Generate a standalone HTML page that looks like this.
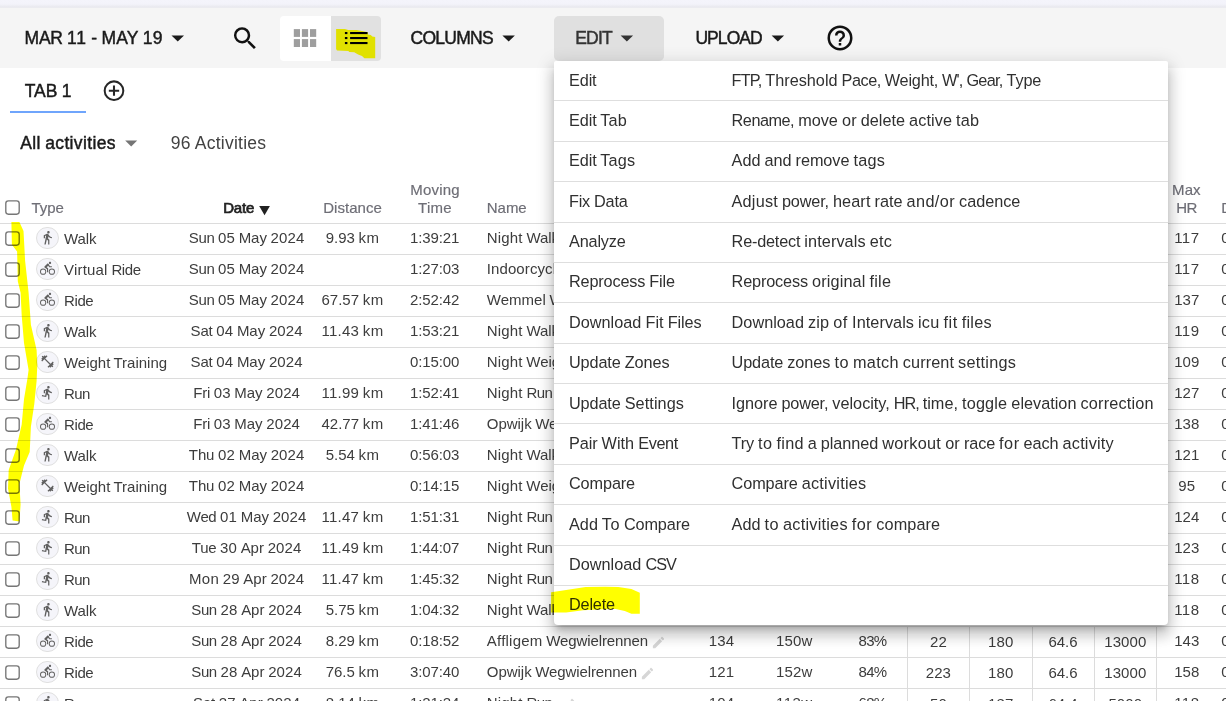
<!DOCTYPE html>
<html lang="en"><head><meta charset="utf-8"><title>Activities</title>
<style>
html,body{margin:0;padding:0}
body{width:1226px;height:701px;overflow:hidden;position:relative;background:#fff;font-family:"Liberation Sans",sans-serif;}
.t{position:absolute;white-space:pre;line-height:20px;}
.a{position:absolute}
.rl{position:absolute;left:0;width:1226px;height:1px;background:#dcdcdc}
.cb{position:absolute;left:5px;width:15px;height:15px}
.ci{position:absolute;left:36.3px;width:20.5px;height:20.5px;border:1px solid #e0e0e0;border-radius:50%;background:#f5f5fa}
.ci svg{position:absolute;left:2.7px;top:2.35px;width:15px;height:15px;fill:#616161}
.vl{position:absolute;width:1px;background:#dcdcdc}
.md{position:absolute;left:0;width:614px;height:1px;background:#dedede}
svg{display:block}
</style></head><body>

<header>
<div class="a" style="left:0;top:0;width:1226px;height:8px;background:linear-gradient(#f4f4fb 0%,#f3f3fa 50%,#eeeef4 70%,#e8e8ee 88%,#eeeef1 100%)"></div>
<div class="a" style="left:0;top:8px;width:1226px;height:60px;background:#f5f5f5"></div>
<div class="a" style="left:280px;top:16px;width:51px;height:45px;background:#fff;border-radius:4px 0 0 4px"></div>
<div class="a" style="left:331px;top:16px;width:50px;height:45px;background:#e1e1e1;border-radius:0 4px 4px 0"></div>
<svg class="a" style="left:0;top:0" width="400" height="70" viewBox="0 0 400 70"><g fill="#9e9e9e"><rect x="293.8" y="29.1" width="6.2" height="7.8"/><rect x="293.8" y="39.1" width="6.2" height="7.9"/><rect x="301.9" y="29.1" width="6.2" height="7.8"/><rect x="301.9" y="39.1" width="6.2" height="7.9"/><rect x="310.0" y="29.1" width="6.2" height="7.8"/><rect x="310.0" y="39.1" width="6.2" height="7.9"/></g>
<g fill="#000"><rect x="344.9" y="32.0" width="2.5" height="2.1"/><rect x="350.1" y="32.0" width="17.4" height="2.1"/><rect x="344.9" y="37.0" width="2.5" height="2.1"/><rect x="350.1" y="37.0" width="17.4" height="2.1"/><rect x="344.9" y="42.0" width="2.5" height="2.1"/><rect x="350.1" y="42.0" width="17.4" height="2.1"/></g></svg>
<div class="a" style="left:554px;top:16px;width:110px;height:45px;background:#e0e0e0;border-radius:5px"></div>
<svg class="a" style="left:0;top:0" width="1226" height="230" viewBox="0 0 1226 230">
<polygon points="171.5,35.4 184.0,35.4 177.75,41.6" fill="#1a1a1a"/>
<polygon points="502.4,35.4 514.9,35.4 508.65,41.6" fill="#1a1a1a"/>
<polygon points="620.6,35.4 633.1,35.4 626.85,41.6" fill="#333"/>
<polygon points="771.6,35.4 784.1,35.4 777.85,41.6" fill="#1a1a1a"/>
<polygon points="125.2,140.4 137.2,140.4 131.2,146.4" fill="#757575"/>
<g transform="translate(230.2,23.4) scale(1.25)" fill="#111"><path d="M9.5,3A6.5,6.5 0 0,1 16,9.5C16,11.11 15.41,12.59 14.44,13.73L14.71,14H15.5L20.5,19L19,20.5L14,15.500V14.71L13.73,14.44C12.59,15.41 11.11,16 9.5,16A6.5,6.5 0 0,1 3,9.5A6.5,6.5 0 0,1 9.500,3M9.5,5C7,5 5,7 5,9.5C5,12 7,14 9.5,14C12,14 14,12 14,9.5C14,7 12,5 9.500,5Z"/></g>
<g transform="translate(825,22.9) scale(1.25)" fill="#111"><path d="M11,18H13V16H11V18M12,2A10,10 0 0,0 2,12A10,10 0 0,0 12,22A10,10 0 0,0 22,12A10,10 0 0,0 12,2M12,20C7.59,20 4,16.41 4,12C4,7.59 7.59,4 12,4C16.41,4 20,7.59 20,12C20,16.41 16.41,20 12,20M12,6A4,4 0 0,0 8,10H10A2,2 0 0,1 12,8A2,2 0 0,1 14,10C14,12 11,11.75 11,15H13C13,12.75 16,12.5 16,10A4,4 0 0,0 12,6Z"/></g>
<g transform="translate(101.6,78.3) scale(1.033)" fill="#262626"><path d="M12,20C7.59,20 4,16.41 4,12C4,7.59 7.59,4 12,4C16.41,4 20,7.59 20,12C20,16.41 16.41,20 12,20M12,2A10,10 0 0,0 2,12A10,10 0 0,0 12,22A10,10 0 0,0 22,12A10,10 0 0,0 12,2M13,7H11V11H7V13H11V17H13V13H17V11H13V7Z"/></g>
</svg>
<div class="a" style="left:10px;top:111px;width:76px;height:2px;background:#6fa5fc"></div>
<span class="t" style="left:24.60px;top:28px;font-size:17.5px;color:#1a1a1a;-webkit-text-stroke:0.45px #1a1a1a;word-spacing:-0.522px"><span style="letter-spacing:-0.27px">MAR</span> <span style="letter-spacing:0.87px">11</span> <span style="letter-spacing:0.12px">-</span> <span style="letter-spacing:0.05px">MAY</span> <span style="letter-spacing:0.22px">19</span></span>
<span class="t" style="left:410.60px;top:28px;font-size:17.5px;color:#1a1a1a;-webkit-text-stroke:0.45px #1a1a1a;letter-spacing:-0.739px">COLUMNS</span>
<span class="t" style="left:575.20px;top:28px;font-size:17.5px;color:#333;-webkit-text-stroke:0.45px #333;letter-spacing:-0.797px">EDIT</span>
<span class="t" style="left:695.40px;top:28px;font-size:17.5px;color:#1a1a1a;-webkit-text-stroke:0.45px #1a1a1a;letter-spacing:-0.922px">UPLOAD</span>
<span class="t" style="left:24.80px;top:81px;font-size:17.5px;color:#1a1a1a;-webkit-text-stroke:0.45px #1a1a1a;word-spacing:-0.518px"><span style="letter-spacing:-0.08px">TAB</span> <span style="letter-spacing:0.22px">1</span></span>
<span class="t" style="left:20.30px;top:133px;font-size:17.5px;color:#1a1a1a;-webkit-text-stroke:0.45px #1a1a1a;word-spacing:-0.518px"><span style="letter-spacing:0.36px">All</span> <span style="letter-spacing:0.36px">activities</span></span>
<span class="t" style="left:170.80px;top:133px;font-size:17.5px;color:#424242;word-spacing:-0.534px"><span style="letter-spacing:0.10px">96</span> <span style="letter-spacing:0.25px">Activities</span></span>
</header>
<main>
<div class="rl" style="top:223.0px"></div>
<div class="rl" style="top:254.0px"></div>
<div class="rl" style="top:285.0px"></div>
<div class="rl" style="top:316.0px"></div>
<div class="rl" style="top:347.0px"></div>
<div class="rl" style="top:378.0px"></div>
<div class="rl" style="top:409.0px"></div>
<div class="rl" style="top:440.0px"></div>
<div class="rl" style="top:471.0px"></div>
<div class="rl" style="top:502.0px"></div>
<div class="rl" style="top:533.0px"></div>
<div class="rl" style="top:564.0px"></div>
<div class="rl" style="top:595.0px"></div>
<div class="rl" style="top:626.0px"></div>
<div class="rl" style="top:657.0px"></div>
<div class="rl" style="top:688.0px"></div>
<div class="vl" style="left:907px;top:626px;height:75px"></div>
<div class="vl" style="left:969px;top:626px;height:75px"></div>
<div class="vl" style="left:1032px;top:626px;height:75px"></div>
<div class="vl" style="left:1094px;top:626px;height:75px"></div>
<div class="vl" style="left:1156px;top:626px;height:75px"></div>
<div class="cb" style="top:199.8px"><svg viewBox="0 0 15 15" width="15" height="15"><rect x="0.8" y="0.8" width="13.4" height="13.4" rx="2.6" fill="#fff" stroke="#767676" stroke-width="1.35"/></svg></div>
<div class="cb" style="top:230.5px"><svg viewBox="0 0 15 15" width="15" height="15"><rect x="0.8" y="0.8" width="13.4" height="13.4" rx="2.6" fill="#fff" stroke="#767676" stroke-width="1.35"/></svg></div>
<div class="ci" style="top:226.7px"><svg viewBox="0 0 24 24"><path d="M13.5,5.5C14.6,5.5 15.5,4.6 15.5,3.5C15.5,2.4 14.6,1.5 13.5,1.5C12.4,1.5 11.5,2.4 11.5,3.5C11.5,4.6 12.4,5.5 13.5,5.5M9.8,8.9L7,23H9.1L10.9,15L13,17V23H15V15.5L12.9,13.5L13.5,10.5C14.8,12 16.8,13 19,13V11C17.1,11 15.5,10 14.7,8.6L13.7,7C13.3,6.4 12.7,6 12,6C11.7,6 11.5,6.1 11.2,6.1L6,8.3V13H8V9.6L9.8,8.9Z"/></svg></div>
<div class="cb" style="top:261.5px"><svg viewBox="0 0 15 15" width="15" height="15"><rect x="0.8" y="0.8" width="13.4" height="13.4" rx="2.6" fill="#fff" stroke="#767676" stroke-width="1.35"/></svg></div>
<div class="ci" style="top:257.7px"><svg viewBox="0 0 24 24"><path d="M5,20.5A3.5,3.5 0 0,1 1.5,17A3.5,3.5 0 0,1 5,13.5A3.5,3.5 0 0,1 8.5,17A3.5,3.5 0 0,1 5,20.5M5,12A5,5 0 0,0 0,17A5,5 0 0,0 5,22A5,5 0 0,0 10,17A5,5 0 0,0 5,12M14.8,10H19V8.2H15.8L13.86,4.93C13.57,4.43 13,4.1 12.4,4.1C11.93,4.1 11.5,4.29 11.2,4.6L7.5,8.29C7.19,8.6 7,9 7,9.5C7,10.13 7.33,10.66 7.85,10.97L11.2,13V18H13V11.5L10.75,9.85L13.07,7.5M19,20.5A3.5,3.5 0 0,1 15.5,17A3.5,3.5 0 0,1 19,13.5A3.5,3.5 0 0,1 22.5,17A3.5,3.5 0 0,1 19,20.5M19,12A5,5 0 0,0 14,17A5,5 0 0,0 19,22A5,5 0 0,0 24,17A5,5 0 0,0 19,12M16,4.8C17,4.8 17.8,4 17.8,3C17.8,2 17,1.2 16,1.2C15,1.2 14.2,2 14.2,3C14.2,4 15,4.8 16,4.8Z"/></svg></div>
<div class="cb" style="top:292.5px"><svg viewBox="0 0 15 15" width="15" height="15"><rect x="0.8" y="0.8" width="13.4" height="13.4" rx="2.6" fill="#fff" stroke="#767676" stroke-width="1.35"/></svg></div>
<div class="ci" style="top:288.7px"><svg viewBox="0 0 24 24"><path d="M5,20.5A3.5,3.5 0 0,1 1.5,17A3.5,3.5 0 0,1 5,13.5A3.5,3.5 0 0,1 8.5,17A3.5,3.5 0 0,1 5,20.5M5,12A5,5 0 0,0 0,17A5,5 0 0,0 5,22A5,5 0 0,0 10,17A5,5 0 0,0 5,12M14.8,10H19V8.2H15.8L13.86,4.93C13.57,4.43 13,4.1 12.4,4.1C11.93,4.1 11.5,4.29 11.2,4.6L7.5,8.29C7.19,8.6 7,9 7,9.5C7,10.13 7.33,10.66 7.85,10.97L11.2,13V18H13V11.5L10.75,9.85L13.07,7.5M19,20.5A3.5,3.5 0 0,1 15.5,17A3.5,3.5 0 0,1 19,13.5A3.5,3.5 0 0,1 22.5,17A3.5,3.5 0 0,1 19,20.5M19,12A5,5 0 0,0 14,17A5,5 0 0,0 19,22A5,5 0 0,0 24,17A5,5 0 0,0 19,12M16,4.8C17,4.8 17.8,4 17.8,3C17.8,2 17,1.2 16,1.2C15,1.2 14.2,2 14.2,3C14.2,4 15,4.8 16,4.8Z"/></svg></div>
<div class="cb" style="top:323.5px"><svg viewBox="0 0 15 15" width="15" height="15"><rect x="0.8" y="0.8" width="13.4" height="13.4" rx="2.6" fill="#fff" stroke="#767676" stroke-width="1.35"/></svg></div>
<div class="ci" style="top:319.7px"><svg viewBox="0 0 24 24"><path d="M13.5,5.5C14.6,5.5 15.5,4.6 15.5,3.5C15.5,2.4 14.6,1.5 13.5,1.5C12.4,1.5 11.5,2.4 11.5,3.5C11.5,4.6 12.4,5.5 13.5,5.5M9.8,8.9L7,23H9.1L10.9,15L13,17V23H15V15.5L12.9,13.5L13.5,10.5C14.8,12 16.8,13 19,13V11C17.1,11 15.5,10 14.7,8.6L13.7,7C13.3,6.4 12.7,6 12,6C11.7,6 11.5,6.1 11.2,6.1L6,8.3V13H8V9.6L9.8,8.9Z"/></svg></div>
<div class="cb" style="top:354.5px"><svg viewBox="0 0 15 15" width="15" height="15"><rect x="0.8" y="0.8" width="13.4" height="13.4" rx="2.6" fill="#fff" stroke="#767676" stroke-width="1.35"/></svg></div>
<div class="ci" style="top:350.7px"><svg viewBox="0 0 24 24"><path d="M20.57,14.86L22,13.43L20.57,12L17,15.57L8.43,7L12,3.43L10.57,2L9.14,3.43L7.71,2L5.57,4.14L4.14,2.71L2.71,4.14L4.14,5.57L2,7.71L3.43,9.14L2,10.57L3.43,12L7,8.43L15.57,17L12,20.57L13.43,22L14.86,20.57L16.29,22L18.43,19.86L19.86,21.29L21.29,19.86L19.86,18.43L22,16.29L20.57,14.86Z"/></svg></div>
<div class="cb" style="top:385.5px"><svg viewBox="0 0 15 15" width="15" height="15"><rect x="0.8" y="0.8" width="13.4" height="13.4" rx="2.6" fill="#fff" stroke="#767676" stroke-width="1.35"/></svg></div>
<div class="ci" style="top:381.7px"><svg viewBox="0 0 24 24"><path d="M13.5,5.5C14.59,5.5 15.5,4.58 15.5,3.5C15.5,2.38 14.59,1.5 13.5,1.5C12.39,1.5 11.5,2.38 11.5,3.5C11.5,4.58 12.39,5.5 13.5,5.5M9.89,19.38L10.89,15L13,17V23H15V15.5L12.89,13.5L13.5,10.5C14.79,12 16.79,13 19,13V11C17.09,11 15.5,10 14.69,8.58L13.69,7C13.29,6.38 12.69,6 12,6C11.69,6 11.5,6.08 11.19,6.08L6,8.28V13H8V9.58L9.79,8.88L8.19,17L3.29,16L2.89,18L9.89,19.38Z"/></svg></div>
<div class="cb" style="top:416.5px"><svg viewBox="0 0 15 15" width="15" height="15"><rect x="0.8" y="0.8" width="13.4" height="13.4" rx="2.6" fill="#fff" stroke="#767676" stroke-width="1.35"/></svg></div>
<div class="ci" style="top:412.7px"><svg viewBox="0 0 24 24"><path d="M5,20.5A3.5,3.5 0 0,1 1.5,17A3.5,3.5 0 0,1 5,13.5A3.5,3.5 0 0,1 8.5,17A3.5,3.5 0 0,1 5,20.5M5,12A5,5 0 0,0 0,17A5,5 0 0,0 5,22A5,5 0 0,0 10,17A5,5 0 0,0 5,12M14.8,10H19V8.2H15.8L13.86,4.93C13.57,4.43 13,4.1 12.4,4.1C11.93,4.1 11.5,4.29 11.2,4.6L7.5,8.29C7.19,8.6 7,9 7,9.5C7,10.13 7.33,10.66 7.85,10.97L11.2,13V18H13V11.5L10.75,9.85L13.07,7.5M19,20.5A3.5,3.5 0 0,1 15.5,17A3.5,3.5 0 0,1 19,13.5A3.5,3.5 0 0,1 22.5,17A3.5,3.5 0 0,1 19,20.5M19,12A5,5 0 0,0 14,17A5,5 0 0,0 19,22A5,5 0 0,0 24,17A5,5 0 0,0 19,12M16,4.8C17,4.8 17.8,4 17.8,3C17.8,2 17,1.2 16,1.2C15,1.2 14.2,2 14.2,3C14.2,4 15,4.8 16,4.8Z"/></svg></div>
<div class="cb" style="top:447.5px"><svg viewBox="0 0 15 15" width="15" height="15"><rect x="0.8" y="0.8" width="13.4" height="13.4" rx="2.6" fill="#fff" stroke="#767676" stroke-width="1.35"/></svg></div>
<div class="ci" style="top:443.7px"><svg viewBox="0 0 24 24"><path d="M13.5,5.5C14.6,5.5 15.5,4.6 15.5,3.5C15.5,2.4 14.6,1.5 13.5,1.5C12.4,1.5 11.5,2.4 11.5,3.5C11.5,4.6 12.4,5.5 13.5,5.5M9.8,8.9L7,23H9.1L10.9,15L13,17V23H15V15.5L12.9,13.5L13.5,10.5C14.8,12 16.8,13 19,13V11C17.1,11 15.5,10 14.7,8.6L13.7,7C13.3,6.4 12.7,6 12,6C11.7,6 11.5,6.1 11.2,6.1L6,8.3V13H8V9.6L9.8,8.9Z"/></svg></div>
<div class="cb" style="top:478.5px"><svg viewBox="0 0 15 15" width="15" height="15"><rect x="0.8" y="0.8" width="13.4" height="13.4" rx="2.6" fill="#fff" stroke="#767676" stroke-width="1.35"/></svg></div>
<div class="ci" style="top:474.7px"><svg viewBox="0 0 24 24"><path d="M20.57,14.86L22,13.43L20.57,12L17,15.57L8.43,7L12,3.43L10.57,2L9.14,3.43L7.71,2L5.57,4.14L4.14,2.71L2.71,4.14L4.14,5.57L2,7.71L3.43,9.14L2,10.57L3.43,12L7,8.43L15.57,17L12,20.57L13.43,22L14.86,20.57L16.29,22L18.43,19.86L19.86,21.29L21.29,19.86L19.86,18.43L22,16.29L20.57,14.86Z"/></svg></div>
<div class="cb" style="top:509.5px"><svg viewBox="0 0 15 15" width="15" height="15"><rect x="0.8" y="0.8" width="13.4" height="13.4" rx="2.6" fill="#fff" stroke="#767676" stroke-width="1.35"/></svg></div>
<div class="ci" style="top:505.7px"><svg viewBox="0 0 24 24"><path d="M13.5,5.5C14.59,5.5 15.5,4.58 15.5,3.5C15.5,2.38 14.59,1.5 13.5,1.5C12.39,1.5 11.5,2.38 11.5,3.5C11.5,4.58 12.39,5.5 13.5,5.5M9.89,19.38L10.89,15L13,17V23H15V15.5L12.89,13.5L13.5,10.5C14.79,12 16.79,13 19,13V11C17.09,11 15.5,10 14.69,8.58L13.69,7C13.29,6.38 12.69,6 12,6C11.69,6 11.5,6.08 11.19,6.08L6,8.28V13H8V9.58L9.79,8.88L8.19,17L3.29,16L2.89,18L9.89,19.38Z"/></svg></div>
<div class="cb" style="top:540.5px"><svg viewBox="0 0 15 15" width="15" height="15"><rect x="0.8" y="0.8" width="13.4" height="13.4" rx="2.6" fill="#fff" stroke="#767676" stroke-width="1.35"/></svg></div>
<div class="ci" style="top:536.7px"><svg viewBox="0 0 24 24"><path d="M13.5,5.5C14.59,5.5 15.5,4.58 15.5,3.5C15.5,2.38 14.59,1.5 13.5,1.5C12.39,1.5 11.5,2.38 11.5,3.5C11.5,4.58 12.39,5.5 13.5,5.5M9.89,19.38L10.89,15L13,17V23H15V15.5L12.89,13.5L13.5,10.5C14.79,12 16.79,13 19,13V11C17.09,11 15.5,10 14.69,8.58L13.69,7C13.29,6.38 12.69,6 12,6C11.69,6 11.5,6.08 11.19,6.08L6,8.28V13H8V9.58L9.79,8.88L8.19,17L3.29,16L2.89,18L9.89,19.38Z"/></svg></div>
<div class="cb" style="top:571.5px"><svg viewBox="0 0 15 15" width="15" height="15"><rect x="0.8" y="0.8" width="13.4" height="13.4" rx="2.6" fill="#fff" stroke="#767676" stroke-width="1.35"/></svg></div>
<div class="ci" style="top:567.7px"><svg viewBox="0 0 24 24"><path d="M13.5,5.5C14.59,5.5 15.5,4.58 15.5,3.5C15.5,2.38 14.59,1.5 13.5,1.5C12.39,1.5 11.5,2.38 11.5,3.5C11.5,4.58 12.39,5.5 13.5,5.5M9.89,19.38L10.89,15L13,17V23H15V15.5L12.89,13.5L13.5,10.5C14.79,12 16.79,13 19,13V11C17.09,11 15.5,10 14.69,8.58L13.69,7C13.29,6.38 12.69,6 12,6C11.69,6 11.5,6.08 11.19,6.08L6,8.28V13H8V9.58L9.79,8.88L8.19,17L3.29,16L2.89,18L9.89,19.38Z"/></svg></div>
<div class="cb" style="top:602.5px"><svg viewBox="0 0 15 15" width="15" height="15"><rect x="0.8" y="0.8" width="13.4" height="13.4" rx="2.6" fill="#fff" stroke="#767676" stroke-width="1.35"/></svg></div>
<div class="ci" style="top:598.7px"><svg viewBox="0 0 24 24"><path d="M13.5,5.5C14.6,5.5 15.5,4.6 15.5,3.5C15.5,2.4 14.6,1.5 13.5,1.5C12.4,1.5 11.5,2.4 11.5,3.5C11.5,4.6 12.4,5.5 13.5,5.5M9.8,8.9L7,23H9.1L10.9,15L13,17V23H15V15.5L12.9,13.5L13.5,10.5C14.8,12 16.8,13 19,13V11C17.1,11 15.5,10 14.7,8.6L13.7,7C13.3,6.4 12.7,6 12,6C11.7,6 11.5,6.1 11.2,6.1L6,8.3V13H8V9.6L9.8,8.9Z"/></svg></div>
<div class="cb" style="top:633.5px"><svg viewBox="0 0 15 15" width="15" height="15"><rect x="0.8" y="0.8" width="13.4" height="13.4" rx="2.6" fill="#fff" stroke="#767676" stroke-width="1.35"/></svg></div>
<div class="ci" style="top:629.7px"><svg viewBox="0 0 24 24"><path d="M5,20.5A3.5,3.5 0 0,1 1.5,17A3.5,3.5 0 0,1 5,13.5A3.5,3.5 0 0,1 8.5,17A3.5,3.5 0 0,1 5,20.5M5,12A5,5 0 0,0 0,17A5,5 0 0,0 5,22A5,5 0 0,0 10,17A5,5 0 0,0 5,12M14.8,10H19V8.2H15.8L13.86,4.93C13.57,4.43 13,4.1 12.4,4.1C11.93,4.1 11.5,4.29 11.2,4.6L7.5,8.29C7.19,8.6 7,9 7,9.5C7,10.13 7.33,10.66 7.85,10.97L11.2,13V18H13V11.5L10.75,9.85L13.07,7.5M19,20.5A3.5,3.5 0 0,1 15.5,17A3.5,3.5 0 0,1 19,13.5A3.5,3.5 0 0,1 22.5,17A3.5,3.5 0 0,1 19,20.5M19,12A5,5 0 0,0 14,17A5,5 0 0,0 19,22A5,5 0 0,0 24,17A5,5 0 0,0 19,12M16,4.8C17,4.8 17.8,4 17.8,3C17.8,2 17,1.2 16,1.2C15,1.2 14.2,2 14.2,3C14.2,4 15,4.8 16,4.8Z"/></svg></div>
<div class="cb" style="top:664.5px"><svg viewBox="0 0 15 15" width="15" height="15"><rect x="0.8" y="0.8" width="13.4" height="13.4" rx="2.6" fill="#fff" stroke="#767676" stroke-width="1.35"/></svg></div>
<div class="ci" style="top:660.7px"><svg viewBox="0 0 24 24"><path d="M5,20.5A3.5,3.5 0 0,1 1.5,17A3.5,3.5 0 0,1 5,13.5A3.5,3.5 0 0,1 8.5,17A3.5,3.5 0 0,1 5,20.5M5,12A5,5 0 0,0 0,17A5,5 0 0,0 5,22A5,5 0 0,0 10,17A5,5 0 0,0 5,12M14.8,10H19V8.2H15.8L13.86,4.93C13.57,4.43 13,4.1 12.4,4.1C11.93,4.1 11.5,4.29 11.2,4.6L7.5,8.29C7.19,8.6 7,9 7,9.5C7,10.13 7.33,10.66 7.85,10.97L11.2,13V18H13V11.5L10.75,9.85L13.07,7.5M19,20.5A3.5,3.5 0 0,1 15.5,17A3.5,3.5 0 0,1 19,13.5A3.5,3.5 0 0,1 22.5,17A3.5,3.5 0 0,1 19,20.5M19,12A5,5 0 0,0 14,17A5,5 0 0,0 19,22A5,5 0 0,0 24,17A5,5 0 0,0 19,12M16,4.8C17,4.8 17.8,4 17.8,3C17.8,2 17,1.2 16,1.2C15,1.2 14.2,2 14.2,3C14.2,4 15,4.8 16,4.8Z"/></svg></div>
<div class="cb" style="top:695.5px"><svg viewBox="0 0 15 15" width="15" height="15"><rect x="0.8" y="0.8" width="13.4" height="13.4" rx="2.6" fill="#fff" stroke="#767676" stroke-width="1.35"/></svg></div>
<div class="ci" style="top:691.7px"><svg viewBox="0 0 24 24"><path d="M13.5,5.5C14.59,5.5 15.5,4.58 15.5,3.5C15.5,2.38 14.59,1.5 13.5,1.5C12.39,1.5 11.5,2.38 11.5,3.5C11.5,4.58 12.39,5.5 13.5,5.5M9.89,19.38L10.89,15L13,17V23H15V15.5L12.89,13.5L13.5,10.5C14.79,12 16.79,13 19,13V11C17.09,11 15.5,10 14.69,8.58L13.69,7C13.29,6.38 12.69,6 12,6C11.69,6 11.5,6.08 11.19,6.08L6,8.28V13H8V9.58L9.79,8.88L8.19,17L3.29,16L2.89,18L9.89,19.38Z"/></svg></div>
<svg class="a" style="left:650.9px;top:634.8px;fill:#d6d6d6" width="15" height="15" viewBox="0 0 24 24"><path d="M20.71,7.04C21.1,6.65 21.1,6 20.71,5.63L18.37,3.29C18,2.9 17.35,2.9 16.96,3.29L15.12,5.12L18.87,8.87M3,17.25V21H6.75L17.81,9.93L14.06,6.18L3,17.25Z"/></svg>
<svg class="a" style="left:639.9px;top:665.8px;fill:#d6d6d6" width="15" height="15" viewBox="0 0 24 24"><path d="M20.71,7.04C21.1,6.65 21.1,6 20.71,5.63L18.37,3.29C18,2.9 17.35,2.9 16.96,3.29L15.12,5.12L18.87,8.87M3,17.25V21H6.75L17.81,9.93L14.06,6.18L3,17.25Z"/></svg>
<svg class="a" style="left:560.5px;top:696.8px;fill:#d6d6d6" width="15" height="15" viewBox="0 0 24 24"><path d="M20.71,7.04C21.1,6.65 21.1,6 20.71,5.63L18.37,3.29C18,2.9 17.35,2.9 16.96,3.29L15.12,5.12L18.87,8.87M3,17.25V21H6.75L17.81,9.93L14.06,6.18L3,17.25Z"/></svg>
<span class="t" style="left:255.4px;top:199.5px;font-size:18.3px;color:#212121;transform:scaleY(0.87);transform-origin:50% 50%">▼</span>
<span class="t" style="left:31.50px;top:198px;font-size:15px;color:#6e6e76;-webkit-text-stroke:0.18px #6e6e76;letter-spacing:-0.031px">Type</span>
<span class="t" style="left:223.20px;top:198px;font-size:15px;color:#212121;-webkit-text-stroke:0.7px #212121;letter-spacing:-0.191px">Date</span>
<span class="t" style="left:323.18px;top:198px;font-size:15px;color:#6e6e76;-webkit-text-stroke:0.18px #6e6e76;letter-spacing:0.035px">Distance</span>
<span class="t" style="left:410.18px;top:180px;font-size:15px;color:#6e6e76;-webkit-text-stroke:0.18px #6e6e76;letter-spacing:0.214px">Moving</span>
<span class="t" style="left:417.96px;top:198px;font-size:15px;color:#6e6e76;-webkit-text-stroke:0.18px #6e6e76;letter-spacing:0.324px">Time</span>
<span class="t" style="left:486.80px;top:198px;font-size:15px;color:#6e6e76;-webkit-text-stroke:0.18px #6e6e76;letter-spacing:-0.043px">Name</span>
<span class="t" style="left:1172.03px;top:180px;font-size:15px;color:#6e6e76;-webkit-text-stroke:0.18px #6e6e76;letter-spacing:0.135px">Max</span>
<span class="t" style="left:1176.35px;top:198px;font-size:15px;color:#6e6e76;-webkit-text-stroke:0.18px #6e6e76;letter-spacing:-0.789px">HR</span>
<span class="t" style="left:1221.30px;top:198px;font-size:15px;color:#6e6e76;-webkit-text-stroke:0.18px #6e6e76;letter-spacing:-1.047px">D</span>
<span class="t" style="left:64.00px;top:229px;font-size:15px;color:#3d3d3d;letter-spacing:-0.074px">Walk</span>
<span class="t" style="left:188.87px;top:228px;font-size:15px;color:#3d3d3d;word-spacing:-0.459px"><span style="letter-spacing:-0.41px">Sun</span> <span style="letter-spacing:0.09px">05</span> <span style="letter-spacing:-0.03px">May</span> <span style="letter-spacing:0.09px">2024</span></span>
<span class="t" style="left:325.63px;top:228px;font-size:15px;color:#3d3d3d;word-spacing:-0.449px"><span style="letter-spacing:0.01px">9.93</span> <span style="letter-spacing:0.38px">km</span></span>
<span class="t" style="left:409.89px;top:228px;font-size:15px;color:#3d3d3d;letter-spacing:-0.089px">1:39:21</span>
<span class="t" style="left:486.80px;top:228px;font-size:15px;color:#3d3d3d;word-spacing:-0.464px"><span style="letter-spacing:0.18px">Night</span> <span style="letter-spacing:-0.07px">Walk</span></span>
<span class="t" style="left:1174.15px;top:228px;font-size:15px;color:#3d3d3d;letter-spacing:0.458px">117</span>
<span class="t" style="left:1221.30px;top:228px;font-size:15px;color:#3d3d3d;letter-spacing:0.094px">0</span>
<span class="t" style="left:64.00px;top:260px;font-size:15px;color:#3d3d3d;word-spacing:-0.464px"><span style="letter-spacing:0.20px">Virtual</span> <span style="letter-spacing:-0.39px">Ride</span></span>
<span class="t" style="left:188.87px;top:259px;font-size:15px;color:#3d3d3d;word-spacing:-0.459px"><span style="letter-spacing:-0.41px">Sun</span> <span style="letter-spacing:0.09px">05</span> <span style="letter-spacing:-0.03px">May</span> <span style="letter-spacing:0.09px">2024</span></span>
<span class="t" style="left:409.89px;top:259px;font-size:15px;color:#3d3d3d;letter-spacing:-0.089px">1:27:03</span>
<span class="t" style="left:486.80px;top:259px;font-size:15px;color:#3d3d3d;letter-spacing:0.093px">Indoorcycling</span>
<span class="t" style="left:1174.15px;top:259px;font-size:15px;color:#3d3d3d;letter-spacing:0.458px">117</span>
<span class="t" style="left:1221.30px;top:259px;font-size:15px;color:#3d3d3d;letter-spacing:0.094px">0</span>
<span class="t" style="left:64.00px;top:291px;font-size:15px;color:#3d3d3d;letter-spacing:-0.387px">Ride</span>
<span class="t" style="left:188.87px;top:290px;font-size:15px;color:#3d3d3d;word-spacing:-0.459px"><span style="letter-spacing:-0.41px">Sun</span> <span style="letter-spacing:0.09px">05</span> <span style="letter-spacing:-0.03px">May</span> <span style="letter-spacing:0.09px">2024</span></span>
<span class="t" style="left:321.42px;top:290px;font-size:15px;color:#3d3d3d;word-spacing:-0.464px"><span style="letter-spacing:0.03px">67.57</span> <span style="letter-spacing:0.38px">km</span></span>
<span class="t" style="left:409.89px;top:290px;font-size:15px;color:#3d3d3d;letter-spacing:-0.089px">2:52:42</span>
<span class="t" style="left:486.80px;top:290px;font-size:15px;color:#3d3d3d;word-spacing:-0.449px"><span style="letter-spacing:0.01px">Wemmel</span> <span style="letter-spacing:-0.11px">Wegwielrennen</span></span>
<span class="t" style="left:1174.15px;top:290px;font-size:15px;color:#3d3d3d;letter-spacing:0.089px">137</span>
<span class="t" style="left:1221.30px;top:290px;font-size:15px;color:#3d3d3d;letter-spacing:0.094px">0</span>
<span class="t" style="left:64.00px;top:322px;font-size:15px;color:#3d3d3d;letter-spacing:-0.074px">Walk</span>
<span class="t" style="left:190.62px;top:321px;font-size:15px;color:#3d3d3d;word-spacing:-0.459px"><span style="letter-spacing:-0.18px">Sat</span> <span style="letter-spacing:0.09px">04</span> <span style="letter-spacing:-0.03px">May</span> <span style="letter-spacing:0.09px">2024</span></span>
<span class="t" style="left:321.42px;top:321px;font-size:15px;color:#3d3d3d;word-spacing:-0.464px"><span style="letter-spacing:0.25px">11.43</span> <span style="letter-spacing:0.38px">km</span></span>
<span class="t" style="left:409.89px;top:321px;font-size:15px;color:#3d3d3d;letter-spacing:-0.089px">1:53:21</span>
<span class="t" style="left:486.80px;top:321px;font-size:15px;color:#3d3d3d;word-spacing:-0.464px"><span style="letter-spacing:0.18px">Night</span> <span style="letter-spacing:-0.07px">Walk</span></span>
<span class="t" style="left:1174.15px;top:321px;font-size:15px;color:#3d3d3d;letter-spacing:0.458px">119</span>
<span class="t" style="left:1221.30px;top:321px;font-size:15px;color:#3d3d3d;letter-spacing:0.094px">0</span>
<span class="t" style="left:64.00px;top:353px;font-size:15px;color:#3d3d3d;word-spacing:-0.746px"><span style="letter-spacing:-0.02px">Weight</span> <span style="letter-spacing:0.00px">Training</span></span>
<span class="t" style="left:190.62px;top:352px;font-size:15px;color:#3d3d3d;word-spacing:-0.459px"><span style="letter-spacing:-0.18px">Sat</span> <span style="letter-spacing:0.09px">04</span> <span style="letter-spacing:-0.03px">May</span> <span style="letter-spacing:0.09px">2024</span></span>
<span class="t" style="left:409.89px;top:352px;font-size:15px;color:#3d3d3d;letter-spacing:-0.089px">0:15:00</span>
<span class="t" style="left:486.80px;top:352px;font-size:15px;color:#3d3d3d;word-spacing:-0.605px"><span style="letter-spacing:0.18px">Night</span> <span style="letter-spacing:-0.02px">Weight</span> <span style="letter-spacing:0.00px">Training</span></span>
<span class="t" style="left:1174.15px;top:352px;font-size:15px;color:#3d3d3d;letter-spacing:0.089px">109</span>
<span class="t" style="left:1221.30px;top:352px;font-size:15px;color:#3d3d3d;letter-spacing:0.094px">0</span>
<span class="t" style="left:64.00px;top:384px;font-size:15px;color:#3d3d3d;letter-spacing:-0.578px">Run</span>
<span class="t" style="left:193.19px;top:383px;font-size:15px;color:#3d3d3d;word-spacing:-0.459px"><span style="letter-spacing:-0.22px">Fri</span> <span style="letter-spacing:0.09px">03</span> <span style="letter-spacing:-0.03px">May</span> <span style="letter-spacing:0.09px">2024</span></span>
<span class="t" style="left:321.42px;top:383px;font-size:15px;color:#3d3d3d;word-spacing:-0.464px"><span style="letter-spacing:0.25px">11.99</span> <span style="letter-spacing:0.38px">km</span></span>
<span class="t" style="left:409.89px;top:383px;font-size:15px;color:#3d3d3d;letter-spacing:-0.089px">1:52:41</span>
<span class="t" style="left:486.80px;top:383px;font-size:15px;color:#3d3d3d;word-spacing:-0.449px"><span style="letter-spacing:0.18px">Night</span> <span style="letter-spacing:-0.58px">Run</span></span>
<span class="t" style="left:1174.15px;top:383px;font-size:15px;color:#3d3d3d;letter-spacing:0.089px">127</span>
<span class="t" style="left:1221.30px;top:383px;font-size:15px;color:#3d3d3d;letter-spacing:0.094px">0</span>
<span class="t" style="left:64.00px;top:415px;font-size:15px;color:#3d3d3d;letter-spacing:-0.387px">Ride</span>
<span class="t" style="left:193.19px;top:414px;font-size:15px;color:#3d3d3d;word-spacing:-0.459px"><span style="letter-spacing:-0.22px">Fri</span> <span style="letter-spacing:0.09px">03</span> <span style="letter-spacing:-0.03px">May</span> <span style="letter-spacing:0.09px">2024</span></span>
<span class="t" style="left:321.42px;top:414px;font-size:15px;color:#3d3d3d;word-spacing:-0.464px"><span style="letter-spacing:0.03px">42.77</span> <span style="letter-spacing:0.38px">km</span></span>
<span class="t" style="left:409.89px;top:414px;font-size:15px;color:#3d3d3d;letter-spacing:-0.089px">1:41:46</span>
<span class="t" style="left:486.80px;top:414px;font-size:15px;color:#3d3d3d;word-spacing:-0.449px"><span style="letter-spacing:-0.03px">Opwijk</span> <span style="letter-spacing:-0.11px">Wegwielrennen</span></span>
<span class="t" style="left:1174.15px;top:414px;font-size:15px;color:#3d3d3d;letter-spacing:0.089px">138</span>
<span class="t" style="left:1221.30px;top:414px;font-size:15px;color:#3d3d3d;letter-spacing:0.094px">0</span>
<span class="t" style="left:64.00px;top:446px;font-size:15px;color:#3d3d3d;letter-spacing:-0.074px">Walk</span>
<span class="t" style="left:188.87px;top:445px;font-size:15px;color:#3d3d3d;word-spacing:-0.459px"><span style="letter-spacing:-0.12px">Thu</span> <span style="letter-spacing:0.09px">02</span> <span style="letter-spacing:-0.03px">May</span> <span style="letter-spacing:0.09px">2024</span></span>
<span class="t" style="left:325.63px;top:445px;font-size:15px;color:#3d3d3d;word-spacing:-0.449px"><span style="letter-spacing:0.01px">5.54</span> <span style="letter-spacing:0.38px">km</span></span>
<span class="t" style="left:409.89px;top:445px;font-size:15px;color:#3d3d3d;letter-spacing:-0.089px">0:56:03</span>
<span class="t" style="left:486.80px;top:445px;font-size:15px;color:#3d3d3d;word-spacing:-0.464px"><span style="letter-spacing:0.18px">Night</span> <span style="letter-spacing:-0.07px">Walk</span></span>
<span class="t" style="left:1174.15px;top:445px;font-size:15px;color:#3d3d3d;letter-spacing:0.089px">121</span>
<span class="t" style="left:1221.30px;top:445px;font-size:15px;color:#3d3d3d;letter-spacing:0.094px">0</span>
<span class="t" style="left:64.00px;top:477px;font-size:15px;color:#3d3d3d;word-spacing:-0.746px"><span style="letter-spacing:-0.02px">Weight</span> <span style="letter-spacing:0.00px">Training</span></span>
<span class="t" style="left:188.87px;top:476px;font-size:15px;color:#3d3d3d;word-spacing:-0.459px"><span style="letter-spacing:-0.12px">Thu</span> <span style="letter-spacing:0.09px">02</span> <span style="letter-spacing:-0.03px">May</span> <span style="letter-spacing:0.09px">2024</span></span>
<span class="t" style="left:409.89px;top:476px;font-size:15px;color:#3d3d3d;letter-spacing:-0.089px">0:14:15</span>
<span class="t" style="left:486.80px;top:476px;font-size:15px;color:#3d3d3d;word-spacing:-0.605px"><span style="letter-spacing:0.18px">Night</span> <span style="letter-spacing:-0.02px">Weight</span> <span style="letter-spacing:0.00px">Training</span></span>
<span class="t" style="left:1178.36px;top:476px;font-size:15px;color:#3d3d3d;letter-spacing:0.094px">95</span>
<span class="t" style="left:1221.30px;top:476px;font-size:15px;color:#3d3d3d;letter-spacing:0.094px">0</span>
<span class="t" style="left:64.00px;top:508px;font-size:15px;color:#3d3d3d;letter-spacing:-0.578px">Run</span>
<span class="t" style="left:186.86px;top:507px;font-size:15px;color:#3d3d3d;word-spacing:-0.459px"><span style="letter-spacing:-0.36px">Wed</span> <span style="letter-spacing:0.09px">01</span> <span style="letter-spacing:-0.03px">May</span> <span style="letter-spacing:0.09px">2024</span></span>
<span class="t" style="left:321.42px;top:507px;font-size:15px;color:#3d3d3d;word-spacing:-0.464px"><span style="letter-spacing:0.25px">11.47</span> <span style="letter-spacing:0.38px">km</span></span>
<span class="t" style="left:409.89px;top:507px;font-size:15px;color:#3d3d3d;letter-spacing:-0.089px">1:51:31</span>
<span class="t" style="left:486.80px;top:507px;font-size:15px;color:#3d3d3d;word-spacing:-0.449px"><span style="letter-spacing:0.18px">Night</span> <span style="letter-spacing:-0.58px">Run</span></span>
<span class="t" style="left:1174.15px;top:507px;font-size:15px;color:#3d3d3d;letter-spacing:0.089px">124</span>
<span class="t" style="left:1221.30px;top:507px;font-size:15px;color:#3d3d3d;letter-spacing:0.094px">0</span>
<span class="t" style="left:64.00px;top:539px;font-size:15px;color:#3d3d3d;letter-spacing:-0.578px">Run</span>
<span class="t" style="left:191.84px;top:538px;font-size:15px;color:#3d3d3d;word-spacing:-0.459px"><span style="letter-spacing:-0.27px">Tue</span> <span style="letter-spacing:0.09px">30</span> <span style="letter-spacing:-0.02px">Apr</span> <span style="letter-spacing:0.09px">2024</span></span>
<span class="t" style="left:321.42px;top:538px;font-size:15px;color:#3d3d3d;word-spacing:-0.464px"><span style="letter-spacing:0.25px">11.49</span> <span style="letter-spacing:0.38px">km</span></span>
<span class="t" style="left:409.89px;top:538px;font-size:15px;color:#3d3d3d;letter-spacing:-0.089px">1:44:07</span>
<span class="t" style="left:486.80px;top:538px;font-size:15px;color:#3d3d3d;word-spacing:-0.449px"><span style="letter-spacing:0.18px">Night</span> <span style="letter-spacing:-0.58px">Run</span></span>
<span class="t" style="left:1174.15px;top:538px;font-size:15px;color:#3d3d3d;letter-spacing:0.089px">123</span>
<span class="t" style="left:1221.30px;top:538px;font-size:15px;color:#3d3d3d;letter-spacing:0.094px">0</span>
<span class="t" style="left:64.00px;top:570px;font-size:15px;color:#3d3d3d;letter-spacing:-0.578px">Run</span>
<span class="t" style="left:189.12px;top:569px;font-size:15px;color:#3d3d3d;word-spacing:-0.459px"><span style="letter-spacing:0.25px">Mon</span> <span style="letter-spacing:0.09px">29</span> <span style="letter-spacing:-0.02px">Apr</span> <span style="letter-spacing:0.09px">2024</span></span>
<span class="t" style="left:321.42px;top:569px;font-size:15px;color:#3d3d3d;word-spacing:-0.464px"><span style="letter-spacing:0.25px">11.47</span> <span style="letter-spacing:0.38px">km</span></span>
<span class="t" style="left:409.89px;top:569px;font-size:15px;color:#3d3d3d;letter-spacing:-0.089px">1:45:32</span>
<span class="t" style="left:486.80px;top:569px;font-size:15px;color:#3d3d3d;word-spacing:-0.449px"><span style="letter-spacing:0.18px">Night</span> <span style="letter-spacing:-0.58px">Run</span></span>
<span class="t" style="left:1174.15px;top:569px;font-size:15px;color:#3d3d3d;letter-spacing:0.458px">118</span>
<span class="t" style="left:1221.30px;top:569px;font-size:15px;color:#3d3d3d;letter-spacing:0.094px">0</span>
<span class="t" style="left:64.00px;top:601px;font-size:15px;color:#3d3d3d;letter-spacing:-0.074px">Walk</span>
<span class="t" style="left:191.35px;top:600px;font-size:15px;color:#3d3d3d;word-spacing:-0.459px"><span style="letter-spacing:-0.41px">Sun</span> <span style="letter-spacing:0.09px">28</span> <span style="letter-spacing:-0.02px">Apr</span> <span style="letter-spacing:0.09px">2024</span></span>
<span class="t" style="left:325.63px;top:600px;font-size:15px;color:#3d3d3d;word-spacing:-0.449px"><span style="letter-spacing:0.01px">5.75</span> <span style="letter-spacing:0.38px">km</span></span>
<span class="t" style="left:409.89px;top:600px;font-size:15px;color:#3d3d3d;letter-spacing:-0.089px">1:04:32</span>
<span class="t" style="left:486.80px;top:600px;font-size:15px;color:#3d3d3d;word-spacing:-0.464px"><span style="letter-spacing:0.18px">Night</span> <span style="letter-spacing:-0.07px">Walk</span></span>
<span class="t" style="left:1174.15px;top:600px;font-size:15px;color:#3d3d3d;letter-spacing:0.458px">118</span>
<span class="t" style="left:1221.30px;top:600px;font-size:15px;color:#3d3d3d;letter-spacing:0.094px">0</span>
<span class="t" style="left:64.00px;top:632px;font-size:15px;color:#3d3d3d;letter-spacing:-0.387px">Ride</span>
<span class="t" style="left:191.35px;top:631px;font-size:15px;color:#3d3d3d;word-spacing:-0.459px"><span style="letter-spacing:-0.41px">Sun</span> <span style="letter-spacing:0.09px">28</span> <span style="letter-spacing:-0.02px">Apr</span> <span style="letter-spacing:0.09px">2024</span></span>
<span class="t" style="left:325.63px;top:631px;font-size:15px;color:#3d3d3d;word-spacing:-0.449px"><span style="letter-spacing:0.01px">8.29</span> <span style="letter-spacing:0.38px">km</span></span>
<span class="t" style="left:409.89px;top:631px;font-size:15px;color:#3d3d3d;letter-spacing:-0.089px">0:18:52</span>
<span class="t" style="left:486.80px;top:631px;font-size:15px;color:#3d3d3d;word-spacing:-0.464px"><span style="letter-spacing:0.23px">Affligem</span> <span style="letter-spacing:-0.11px">Wegwielrennen</span></span>
<span class="t" style="left:1174.15px;top:631px;font-size:15px;color:#3d3d3d;letter-spacing:0.089px">143</span>
<span class="t" style="left:1221.30px;top:631px;font-size:15px;color:#3d3d3d;letter-spacing:0.094px">0</span>
<span class="t" style="left:708.85px;top:631px;font-size:15px;color:#3d3d3d;letter-spacing:0.089px">134</span>
<span class="t" style="left:776.02px;top:631px;font-size:15px;color:#3d3d3d;letter-spacing:0.176px">150w</span>
<span class="t" style="left:858.57px;top:631px;font-size:15px;color:#3d3d3d;letter-spacing:-0.724px">83%</span>
<span class="t" style="left:929.96px;top:632px;font-size:15px;color:#3d3d3d;letter-spacing:0.094px">22</span>
<span class="t" style="left:988.05px;top:632px;font-size:15px;color:#3d3d3d;letter-spacing:0.089px">180</span>
<span class="t" style="left:1048.38px;top:632px;font-size:15px;color:#3d3d3d;letter-spacing:0.012px">64.6</span>
<span class="t" style="left:1104.22px;top:632px;font-size:15px;color:#3d3d3d;letter-spacing:0.087px">13000</span>
<span class="t" style="left:64.00px;top:663px;font-size:15px;color:#3d3d3d;letter-spacing:-0.387px">Ride</span>
<span class="t" style="left:191.35px;top:662px;font-size:15px;color:#3d3d3d;word-spacing:-0.459px"><span style="letter-spacing:-0.41px">Sun</span> <span style="letter-spacing:0.09px">28</span> <span style="letter-spacing:-0.02px">Apr</span> <span style="letter-spacing:0.09px">2024</span></span>
<span class="t" style="left:325.63px;top:662px;font-size:15px;color:#3d3d3d;word-spacing:-0.449px"><span style="letter-spacing:0.01px">76.5</span> <span style="letter-spacing:0.38px">km</span></span>
<span class="t" style="left:409.89px;top:662px;font-size:15px;color:#3d3d3d;letter-spacing:-0.089px">3:07:40</span>
<span class="t" style="left:486.80px;top:662px;font-size:15px;color:#3d3d3d;word-spacing:-0.449px"><span style="letter-spacing:-0.03px">Opwijk</span> <span style="letter-spacing:-0.11px">Wegwielrennen</span></span>
<span class="t" style="left:1174.15px;top:662px;font-size:15px;color:#3d3d3d;letter-spacing:0.089px">158</span>
<span class="t" style="left:1221.30px;top:662px;font-size:15px;color:#3d3d3d;letter-spacing:0.094px">0</span>
<span class="t" style="left:708.85px;top:662px;font-size:15px;color:#3d3d3d;letter-spacing:0.089px">121</span>
<span class="t" style="left:776.02px;top:662px;font-size:15px;color:#3d3d3d;letter-spacing:0.176px">152w</span>
<span class="t" style="left:858.57px;top:662px;font-size:15px;color:#3d3d3d;letter-spacing:-0.724px">84%</span>
<span class="t" style="left:925.75px;top:663px;font-size:15px;color:#3d3d3d;letter-spacing:0.089px">223</span>
<span class="t" style="left:988.05px;top:663px;font-size:15px;color:#3d3d3d;letter-spacing:0.089px">180</span>
<span class="t" style="left:1048.38px;top:663px;font-size:15px;color:#3d3d3d;letter-spacing:0.012px">64.6</span>
<span class="t" style="left:1104.22px;top:663px;font-size:15px;color:#3d3d3d;letter-spacing:0.087px">13000</span>
<span class="t" style="left:64.00px;top:694px;font-size:15px;color:#3d3d3d;letter-spacing:-0.578px">Run</span>
<span class="t" style="left:193.09px;top:693px;font-size:15px;color:#3d3d3d;word-spacing:-0.459px"><span style="letter-spacing:-0.18px">Sat</span> <span style="letter-spacing:0.09px">27</span> <span style="letter-spacing:-0.02px">Apr</span> <span style="letter-spacing:0.09px">2024</span></span>
<span class="t" style="left:325.63px;top:693px;font-size:15px;color:#3d3d3d;word-spacing:-0.449px"><span style="letter-spacing:0.01px">8.14</span> <span style="letter-spacing:0.38px">km</span></span>
<span class="t" style="left:409.89px;top:693px;font-size:15px;color:#3d3d3d;letter-spacing:-0.089px">1:21:24</span>
<span class="t" style="left:486.80px;top:693px;font-size:15px;color:#3d3d3d;word-spacing:-0.449px"><span style="letter-spacing:0.18px">Night</span> <span style="letter-spacing:-0.58px">Run</span></span>
<span class="t" style="left:1174.15px;top:693px;font-size:15px;color:#3d3d3d;letter-spacing:0.458px">118</span>
<span class="t" style="left:1221.30px;top:693px;font-size:15px;color:#3d3d3d;letter-spacing:0.094px">0</span>
<span class="t" style="left:708.85px;top:693px;font-size:15px;color:#3d3d3d;letter-spacing:0.089px">104</span>
<span class="t" style="left:776.02px;top:693px;font-size:15px;color:#3d3d3d;letter-spacing:0.453px">113w</span>
<span class="t" style="left:858.57px;top:693px;font-size:15px;color:#3d3d3d;letter-spacing:-0.724px">68%</span>
<span class="t" style="left:929.96px;top:694px;font-size:15px;color:#3d3d3d;letter-spacing:0.094px">50</span>
<span class="t" style="left:988.05px;top:694px;font-size:15px;color:#3d3d3d;letter-spacing:0.089px">187</span>
<span class="t" style="left:1048.38px;top:694px;font-size:15px;color:#3d3d3d;letter-spacing:0.012px">64.4</span>
<span class="t" style="left:1108.43px;top:694px;font-size:15px;color:#3d3d3d;letter-spacing:0.090px">5000</span>
</main>
<svg class="a" style="left:0;top:0;mix-blend-mode:multiply" width="60" height="701" viewBox="0 0 60 701"><polygon fill="#ffff00" points="11.4,221.9 11.9,244.7 17.1,251.6 17.8,281.3 20.6,292.7 21.7,315.6 24,343 28.6,370 27.4,378.7 24,399.3 21.7,424.4 16,449.6 8.7,470.1 8,488.4 11.4,506.7 12.6,520.4 19.4,521.6 20.6,504.4 19.4,483.9 24,465.6 29.7,451.9 30.9,426.7 34.3,403.9 36.6,381 37.3,365 36.6,349.9 30.9,324.7 28.6,292.7 25.1,260.7 23.5,231 19.4,221.9"/></svg>
<svg class="a" style="left:0;top:0;mix-blend-mode:multiply" width="400" height="70" viewBox="0 0 400 70"><polygon fill="#ffff00" points="336.1,28.9 344.9,28.9 348.3,29.9 356.6,30.1 362,31 367.9,32.3 367.9,34.5 370.8,35 372.3,36.6 375.2,36.9 375.2,58.2 364.4,58.2 362,56 358.1,54.5 354.2,52.3 349.3,51.9 348.3,50.9 337,50.6 336.1,49.1"/></svg>
<div role="menu">
<div class="a" style="left:554px;top:61px;width:614px;height:564px;background:#fff;border-radius:2px 2px 4px 4px;box-shadow:0 6.25px 6.25px -3.75px rgba(0,0,0,.2),0 10px 12.5px 1.25px rgba(0,0,0,.14),0 3.75px 17.5px 2.5px rgba(0,0,0,.12)">
<div class="md" style="top:39px"></div>
<div class="md" style="top:80px"></div>
<div class="md" style="top:120px"></div>
<div class="md" style="top:161px"></div>
<div class="md" style="top:201px"></div>
<div class="md" style="top:241px"></div>
<div class="md" style="top:282px"></div>
<div class="md" style="top:322px"></div>
<div class="md" style="top:362px"></div>
<div class="md" style="top:403px"></div>
<div class="md" style="top:443px"></div>
<div class="md" style="top:484px"></div>
<div class="md" style="top:524px"></div>
</div>
<span class="t" style="left:569.00px;top:70px;font-size:16.25px;color:#303030;letter-spacing:-0.121px">Edit</span>
<span class="t" style="left:731.60px;top:70px;font-size:16.25px;color:#303030;word-spacing:-0.598px"><span style="letter-spacing:-0.85px">FTP,</span> <span style="letter-spacing:0.01px">Threshold</span> <span style="letter-spacing:-0.45px">Pace,</span> <span style="letter-spacing:-0.21px">Weight,</span> <span style="letter-spacing:-0.83px">W&#x27;,</span> <span style="letter-spacing:-0.70px">Gear,</span> <span style="letter-spacing:-0.17px">Type</span></span>
<span class="t" style="left:569.00px;top:110px;font-size:16.25px;color:#303030;word-spacing:-0.812px"><span style="letter-spacing:-0.12px">Edit</span> <span style="letter-spacing:0.19px">Tab</span></span>
<span class="t" style="left:731.60px;top:110px;font-size:16.25px;color:#303030;word-spacing:-0.493px"><span style="letter-spacing:-0.49px">Rename,</span> <span style="letter-spacing:0.01px">move</span> <span style="letter-spacing:0.16px">or</span> <span style="letter-spacing:0.00px">delete</span> <span style="letter-spacing:0.09px">active</span> <span style="letter-spacing:0.23px">tab</span></span>
<span class="t" style="left:569.00px;top:150px;font-size:16.25px;color:#303030;word-spacing:-0.812px"><span style="letter-spacing:-0.12px">Edit</span> <span style="letter-spacing:0.21px">Tags</span></span>
<span class="t" style="left:731.60px;top:150px;font-size:16.25px;color:#303030;word-spacing:-0.489px"><span style="letter-spacing:0.01px">Add</span> <span style="letter-spacing:-0.05px">and</span> <span style="letter-spacing:-0.07px">remove</span> <span style="letter-spacing:0.24px">tags</span></span>
<span class="t" style="left:569.00px;top:191px;font-size:16.25px;color:#303030;word-spacing:-0.499px"><span style="letter-spacing:-0.22px">Fix</span> <span style="letter-spacing:-0.16px">Data</span></span>
<span class="t" style="left:731.60px;top:191px;font-size:16.25px;color:#303030;word-spacing:-0.496px"><span style="letter-spacing:0.19px">Adjust</span> <span style="letter-spacing:-0.16px">power,</span> <span style="letter-spacing:0.12px">heart</span> <span style="letter-spacing:-0.01px">rate</span> <span style="letter-spacing:0.40px">and/or</span> <span style="letter-spacing:-0.03px">cadence</span></span>
<span class="t" style="left:569.00px;top:231px;font-size:16.25px;color:#303030;letter-spacing:-0.172px">Analyze</span>
<span class="t" style="left:731.60px;top:231px;font-size:16.25px;color:#303030;word-spacing:-0.491px"><span style="letter-spacing:-0.20px">Re-detect</span> <span style="letter-spacing:0.10px">intervals</span> <span style="letter-spacing:0.26px">etc</span></span>
<span class="t" style="left:569.00px;top:271px;font-size:16.25px;color:#303030;word-spacing:-0.499px"><span style="letter-spacing:-0.15px">Reprocess</span> <span style="letter-spacing:-0.17px">File</span></span>
<span class="t" style="left:731.60px;top:271px;font-size:16.25px;color:#303030;word-spacing:-0.491px"><span style="letter-spacing:-0.15px">Reprocess</span> <span style="letter-spacing:0.15px">original</span> <span style="letter-spacing:0.20px">file</span></span>
<span class="t" style="left:569.00px;top:312px;font-size:16.25px;color:#303030;word-spacing:-0.483px"><span style="letter-spacing:0.01px">Download</span> <span style="letter-spacing:0.06px">Fit</span> <span style="letter-spacing:-0.08px">Files</span></span>
<span class="t" style="left:731.60px;top:312px;font-size:16.25px;color:#303030;word-spacing:-0.489px"><span style="letter-spacing:0.01px">Download</span> <span style="letter-spacing:0.12px">zip</span> <span style="letter-spacing:0.68px">of</span> <span style="letter-spacing:0.05px">Intervals</span> <span style="letter-spacing:0.21px">icu</span> <span style="letter-spacing:0.56px">fit</span> <span style="letter-spacing:0.21px">files</span></span>
<span class="t" style="left:569.00px;top:352px;font-size:16.25px;color:#303030;word-spacing:-0.499px"><span style="letter-spacing:-0.13px">Update</span> <span style="letter-spacing:-0.07px">Zones</span></span>
<span class="t" style="left:731.60px;top:352px;font-size:16.25px;color:#303030;word-spacing:-0.493px"><span style="letter-spacing:-0.13px">Update</span> <span style="letter-spacing:-0.04px">zones</span> <span style="letter-spacing:0.44px">to</span> <span style="letter-spacing:0.32px">match</span> <span style="letter-spacing:0.09px">current</span> <span style="letter-spacing:0.26px">settings</span></span>
<span class="t" style="left:569.00px;top:393px;font-size:16.25px;color:#303030;word-spacing:-0.499px"><span style="letter-spacing:-0.13px">Update</span> <span style="letter-spacing:0.08px">Settings</span></span>
<span class="t" style="left:731.60px;top:393px;font-size:16.25px;color:#303030;word-spacing:-0.492px"><span style="letter-spacing:-0.05px">Ignore</span> <span style="letter-spacing:-0.16px">power,</span> <span style="letter-spacing:-0.01px">velocity,</span> <span style="letter-spacing:-1.06px">HR,</span> <span style="letter-spacing:0.03px">time,</span> <span style="letter-spacing:0.16px">toggle</span> <span style="letter-spacing:0.01px">elevation</span> <span style="letter-spacing:0.19px">correction</span></span>
<span class="t" style="left:569.00px;top:433px;font-size:16.25px;color:#303030;word-spacing:-0.491px"><span style="letter-spacing:-0.11px">Pair</span> <span style="letter-spacing:0.04px">With</span> <span style="letter-spacing:-0.37px">Event</span></span>
<span class="t" style="left:731.60px;top:433px;font-size:16.25px;color:#303030;word-spacing:-0.494px"><span style="letter-spacing:-0.14px">Try</span> <span style="letter-spacing:0.44px">to</span> <span style="letter-spacing:0.24px">find</span> <span style="letter-spacing:-0.20px">a</span> <span style="letter-spacing:-0.03px">planned</span> <span style="letter-spacing:0.27px">workout</span> <span style="letter-spacing:0.16px">or</span> <span style="letter-spacing:-0.12px">race</span> <span style="letter-spacing:0.49px">for</span> <span style="letter-spacing:-0.08px">each</span> <span style="letter-spacing:0.22px">activity</span></span>
<span class="t" style="left:569.00px;top:473px;font-size:16.25px;color:#303030;letter-spacing:-0.114px">Compare</span>
<span class="t" style="left:731.60px;top:473px;font-size:16.25px;color:#303030;word-spacing:-0.499px"><span style="letter-spacing:-0.11px">Compare</span> <span style="letter-spacing:0.24px">activities</span></span>
<span class="t" style="left:569.00px;top:514px;font-size:16.25px;color:#303030;word-spacing:-0.655px"><span style="letter-spacing:0.01px">Add</span> <span style="letter-spacing:0.51px">To</span> <span style="letter-spacing:-0.11px">Compare</span></span>
<span class="t" style="left:731.60px;top:514px;font-size:16.25px;color:#303030;word-spacing:-0.495px"><span style="letter-spacing:0.01px">Add</span> <span style="letter-spacing:0.44px">to</span> <span style="letter-spacing:0.24px">activities</span> <span style="letter-spacing:0.49px">for</span> <span style="letter-spacing:0.10px">compare</span></span>
<span class="t" style="left:569.00px;top:554px;font-size:16.25px;color:#303030;word-spacing:-0.483px"><span style="letter-spacing:0.01px">Download</span> <span style="letter-spacing:-0.95px">CSV</span></span>
<span class="t" style="left:569.00px;top:594px;font-size:16.25px;color:#303030;letter-spacing:-0.198px">Delete</span>
</div>
<svg class="a" style="left:0;top:0;mix-blend-mode:multiply" width="700" height="701" viewBox="0 0 700 701"><polygon fill="#ffff00" points="551.1,592.2 559.6,591.1 572.6,588.9 585.7,587 605.3,586.7 618.3,587 631.4,588.9 639.8,592.8 639.8,613.7 631.4,613.7 624.8,611.1 615.7,608.9 602.6,609.2 583.1,610.2 566.1,612.4 551.1,612.4"/></svg>
</body></html>
